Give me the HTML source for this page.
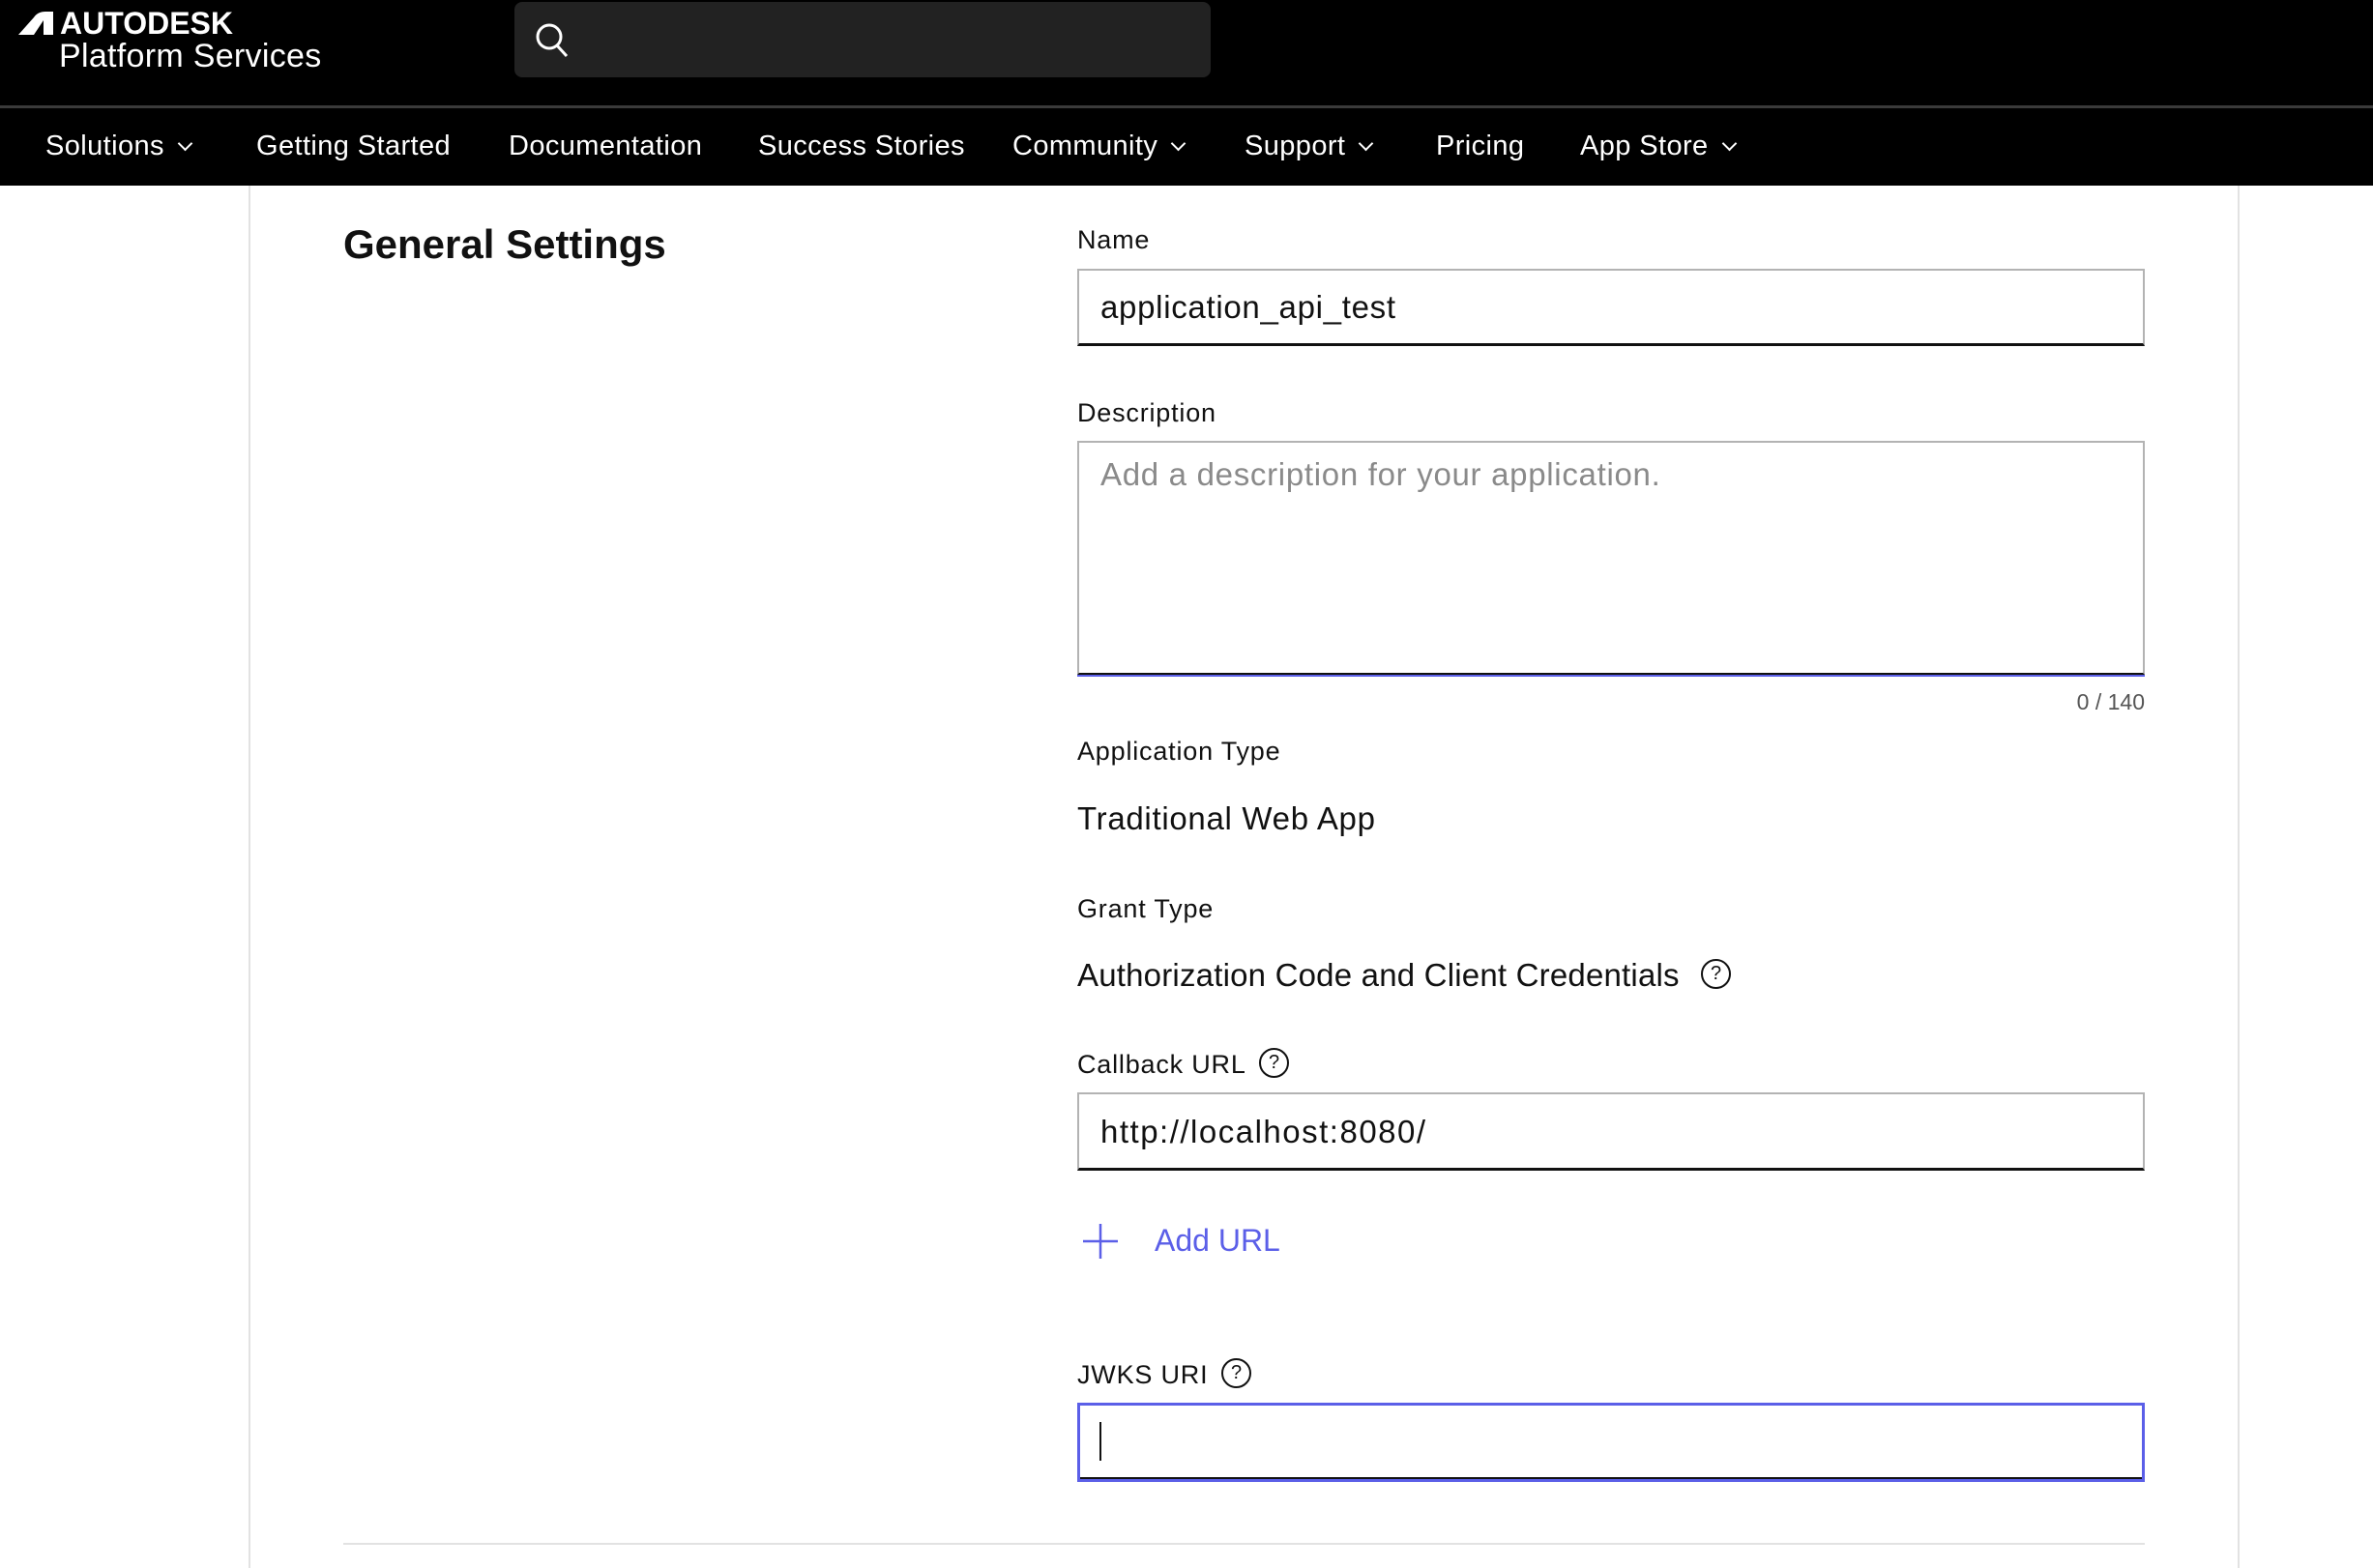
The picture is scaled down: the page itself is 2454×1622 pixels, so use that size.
<!DOCTYPE html>
<html><head><meta charset="utf-8"><style>
*{margin:0;padding:0;box-sizing:border-box}
body{width:2454px;height:1622px;overflow:hidden;background:#fff;font-family:"Liberation Sans",sans-serif;color:#000;position:relative}
.a{position:absolute;white-space:nowrap}
#top{position:absolute;left:0;top:0;width:2454px;height:192px;background:#000}
#sep{position:absolute;left:0;top:109px;width:2454px;height:3px;background:#3a3a3a}
.nav{position:absolute;top:134px;color:#fff;font-size:29px;line-height:34px;letter-spacing:0.4px}
.chev{display:inline-block;width:11px;height:11px;border-right:2px solid #fff;border-bottom:2px solid #fff;transform:rotate(45deg);margin-left:16px;position:relative;top:-6px}
.lbl{position:absolute;left:1114px;font-size:27px;line-height:30px;color:#111;letter-spacing:0.8px}
.val{position:absolute;left:1114px;font-size:33px;line-height:36px;color:#111;letter-spacing:0.7px}
.inp{position:absolute;left:1114px;width:1104px;border:2px solid #b3b3b3;border-bottom:3px solid #111;background:#fff}
.q{position:absolute;width:31px;height:31px;border:2px solid #111;border-radius:50%;font-size:20px;line-height:27px;text-align:center;color:#111}
</style></head><body>
<div id="top"></div><div id="sep"></div>
<svg class="a" style="left:19px;top:12px" width="36" height="24" viewBox="0 0 36 24"><path d="M0 24 L16 6 Q20 0 28 0 L36 0 L36 24 L26 24 L26 9 L16 24 Z" fill="#fff"/></svg>
<div class="a" style="left:62px;top:6px;color:#fff;font-weight:bold;font-size:32px;line-height:36px;letter-spacing:0px">AUTODESK</div>
<div class="a" style="left:61px;top:39px;color:#fff;font-size:34px;line-height:38px;letter-spacing:0.3px">Platform Services</div>
<div class="a" style="left:532px;top:2px;width:720px;height:78px;background:#222;border-radius:8px"></div>
<svg class="a" style="left:551px;top:22px" width="40" height="40" viewBox="0 0 40 40"><circle cx="17" cy="16" r="12" fill="none" stroke="#fff" stroke-width="3"/><path d="M25 25 L35 36" stroke="#fff" stroke-width="3"/></svg>
<div class="nav" style="left:47px">Solutions<span class="chev"></span></div>
<div class="nav" style="left:265px">Getting Started</div>
<div class="nav" style="left:526px">Documentation</div>
<div class="nav" style="left:784px">Success Stories</div>
<div class="nav" style="left:1047px">Community<span class="chev"></span></div>
<div class="nav" style="left:1287px">Support<span class="chev"></span></div>
<div class="nav" style="left:1485px">Pricing</div>
<div class="nav" style="left:1634px">App Store<span class="chev"></span></div>

<div class="a" style="left:257px;top:192px;width:2px;height:1430px;background:#e2e2e2"></div>
<div class="a" style="left:2314px;top:192px;width:2px;height:1430px;background:#e2e2e2"></div>

<div class="a" style="left:355px;top:228px;font-size:42px;line-height:50px;font-weight:bold;color:#111">General Settings</div>

<div class="lbl" style="top:233px">Name</div>
<div class="inp" style="top:278px;height:80px"></div>
<div class="val" style="left:1138px;top:300px">application_api_test</div>

<div class="lbl" style="top:412px">Description</div>
<div class="inp" style="top:456px;height:242px;border-bottom:2px solid #111;box-shadow:0 2px 0 #5b5fe8"></div>
<div class="val" style="left:1138px;top:473px;color:#8a8a8a">Add a description for your application.</div>
<div class="a" style="left:2100px;width:118px;text-align:right;top:713px;font-size:23px;line-height:26px;color:#555">0 / 140</div>

<div class="lbl" style="top:762px">Application Type</div>
<div class="val" style="top:829px">Traditional Web App</div>

<div class="lbl" style="top:925px">Grant Type</div>
<div class="val" style="top:991px;letter-spacing:0.2px">Authorization Code and Client Credentials</div>
<div class="q" style="left:1759px;top:992px">?</div>

<div class="lbl" style="top:1086px">Callback URL</div>
<div class="q" style="left:1302px;top:1084px">?</div>
<div class="inp" style="top:1130px;height:81px"></div>
<div class="val" style="left:1138px;top:1153px;letter-spacing:1.5px">http://localhost:8080/</div>

<svg class="a" style="left:1118px;top:1264px" width="40" height="40" viewBox="0 0 40 40"><path d="M20 2 V38 M2 20 H38" stroke="#5b5fe8" stroke-width="2.5"/></svg>
<div class="a" style="left:1194px;top:1265px;font-size:32px;line-height:36px;color:#5b5fe8">Add URL</div>

<div class="lbl" style="top:1407px">JWKS URI</div>
<div class="q" style="left:1263px;top:1405px">?</div>
<div class="inp" style="top:1451px;height:82px;border:3px solid #5b5fe8;box-shadow:inset 0 -2px 0 #111"></div>
<div class="a" style="left:1137px;top:1471px;width:2px;height:40px;background:#111"></div>

<div class="a" style="left:355px;top:1596px;width:1863px;height:2px;background:#e2e2e2"></div>
</body></html>
